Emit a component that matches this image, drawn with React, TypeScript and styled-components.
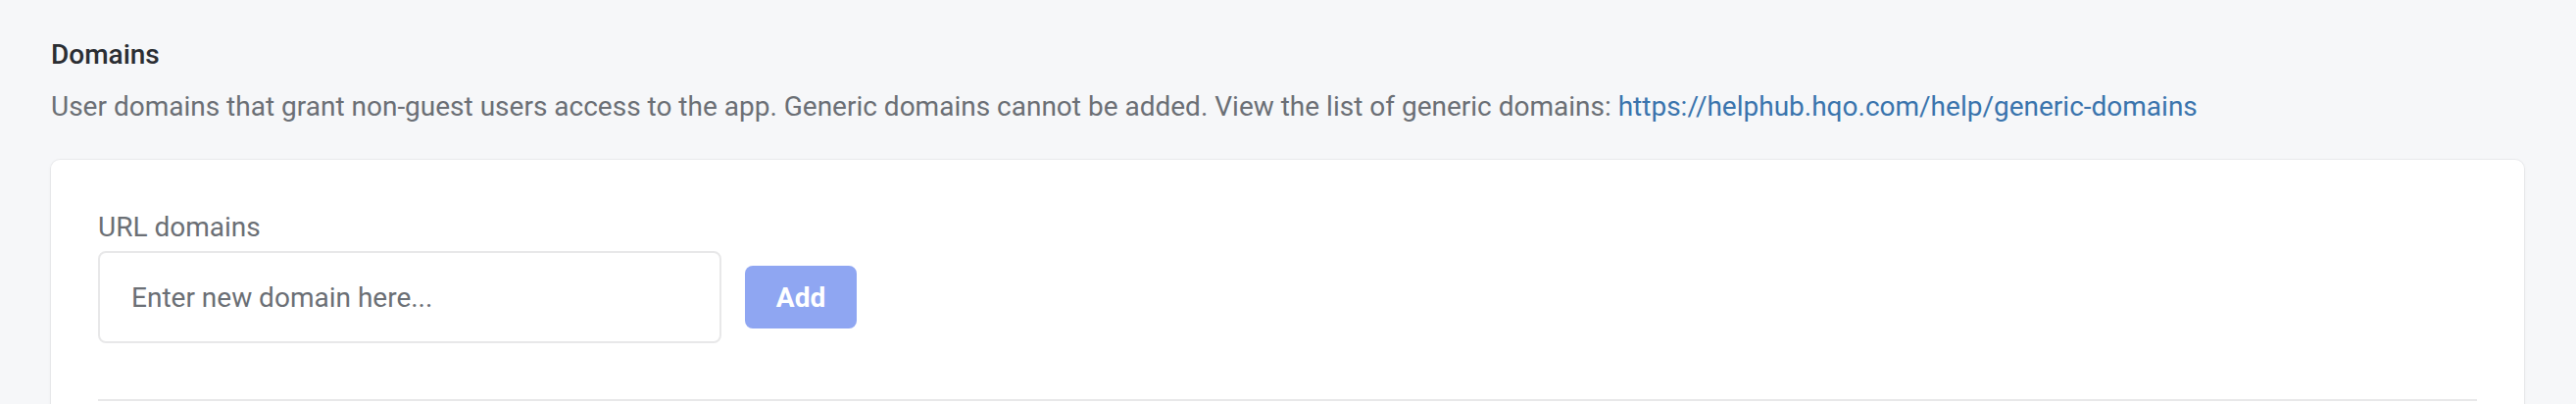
import React from "react";
import styled, { createGlobalStyle } from "styled-components";

const GlobalStyle = createGlobalStyle`
  html, body {
    margin: 0;
    padding: 0;
    background: #f6f7f9;
    font-family: Roboto, "Liberation Sans", Arial, sans-serif;
  }
  * { box-sizing: border-box; }
`;

const Page = styled.div`
  padding: 35px 53px 0 52px;
  background: #f6f7f9;
  min-height: 412px;
`;

const Title = styled.h2`
  margin: 0;
  font-size: 28px;
  line-height: 42px;
  font-weight: 500;
  color: #2b2e33;
`;

const Description = styled.p`
  margin: 11px 0 0;
  font-size: 28px;
  line-height: 42px;
  font-weight: 400;
  color: #6b6f75;
  white-space: nowrap;
`;

const Link = styled.a`
  color: #3a74ad;
  text-decoration: none;
`;

const Card = styled.section`
  margin-top: 33px;
  background: #ffffff;
  border-radius: 9px 9px 0 0;
  box-shadow: 0 0 0 1px rgba(0, 0, 0, 0.035), 0 1px 4px rgba(0, 0, 0, 0.06);
  padding: 48px 48px 40px;
  min-height: 260px;
`;

const Label = styled.label`
  display: block;
  font-size: 28px;
  line-height: 42px;
  color: #6b6f75;
  margin-bottom: 3px;
`;

const Row = styled.div`
  display: flex;
  align-items: center;
  gap: 24px;
`;

const Input = styled.input`
  width: 636px;
  height: 94px;
  border: 2px solid #e8e8e9;
  border-radius: 8px;
  padding: 0 32px;
  font-family: Roboto, "Liberation Sans", Arial, sans-serif;
  font-size: 28px;
  color: #2b2e33;
  background: #fff;
  outline: none;
  &::placeholder {
    color: #6b6f75;
    opacity: 1;
  }
`;

const Button = styled.button`
  width: 114px;
  height: 64px;
  border: none;
  border-radius: 8px;
  background: #8fa6f2;
  color: #ffffff;
  font-family: Roboto, "Liberation Sans", Arial, sans-serif;
  font-size: 28px;
  font-weight: 700;
  cursor: pointer;
`;

const Divider = styled.hr`
  margin: 57px 0 0;
  border: none;
  height: 2px;
  background: #e8e8e9;
`;

export default function App() {
  return (
    <>
      <GlobalStyle />
      <Page>
        <Title>Domains</Title>
        <Description>
          User domains that grant non-guest users access to the app. Generic domains cannot be added. View the list of generic domains:{" "}
          <Link href="#">https://helphub.hqo.com/help/generic-domains</Link>
        </Description>
        <Card>
          <Label htmlFor="domain">URL domains</Label>
          <Row>
            <Input id="domain" placeholder="Enter new domain here..." />
            <Button>Add</Button>
          </Row>
          <Divider />
        </Card>
      </Page>
    </>
  );
}
